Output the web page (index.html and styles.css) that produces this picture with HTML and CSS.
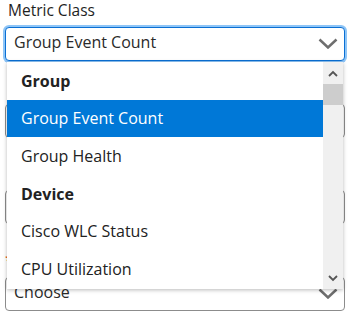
FILE: index.html
```html
<!DOCTYPE html>
<html>
<head>
<meta charset="utf-8">
<title>Metric Class</title>
<link rel="stylesheet" href="styles.css">
</head>
<body>
<div class="form">

<div class="field first">
<label class="label">Metric Class</label>
<div class="select focus">
<span class="value">Group Event Count</span>
<svg class="chev" width="20" height="11" viewBox="0 0 20 11"><polyline points="1.5,1.5 10,9.5 18.5,1.5"/></svg>
</div>

<div class="dropdown">
<ul class="options">
<li class="group">Group</li>
<li class="opt selected">Group Event Count</li>
<li class="opt">Group Health</li>
<li class="group">Device</li>
<li class="opt">Cisco WLC Status</li>
<li class="opt">CPU Utilization</li>
</ul>
<div class="scrollbar">
<div class="sb-btn"><svg width="10" height="7" viewBox="0 0 10 7"><polyline points="1,6 5,2 9,6"/></svg></div>
<div class="sb-thumb"></div>
<div class="sb-track"></div>
<div class="sb-btn"><svg width="10" height="7" viewBox="0 0 10 7"><polyline points="1,1 5,5 9,1"/></svg></div>
</div>
</div>
</div>

<!-- fields below are covered by the open list -->
<div class="field second">
<label class="label"></label>
<div class="select"></div>
</div>

<div class="field third">
<label class="label"></label>
<div class="input"></div>
</div>

<div class="field fourth">
<label class="label req"><span class="star">*</span></label>
<div class="select">
<span class="value">Choose</span>
<svg class="chev" width="20" height="11" viewBox="0 0 20 11"><polyline points="1.5,1.5 10,9.5 18.5,1.5"/></svg>
</div>
</div>

</div>
</body>
</html>
```

FILE: styles.css
```css
/* Metric picker form
*/

body
{ margin: 0;
font-family: "Open Sans", "Liberation Sans", sans-serif;
color: #222;
background-color: #fff;
}

div.form
{ padding: 0 4px 0 5px;
}

div.field
{ position: relative;
}

div.second { margin-top: 16px; }
div.third { margin-top: 25px; }
div.fourth { margin-top: 26px; }

label.label
{ display: block;
height: 20px;
padding-left: 3px;
font-size: 15.5px;
line-height: 20px;
color: #1e1e1e;
}

label.req
{ padding-left: 0;
}

span.star
{ color: #e8590c;
}

/* Select boxes */

div.select, div.input
{ display: flex;
align-items: flex-start;
justify-content: space-between;
box-sizing: border-box;
height: 34px;
margin-top: 7px;
padding: 2px 6px 0 8px;
border: 1px solid #8c8c8c;
border-radius: 4px;
background-color: #fff;
}

div.select.focus
{ border-color: #0a6fd3;
box-shadow: 0 0 0 2px #8ec5f7;
}

span.value
{ font-size: 16px;
line-height: 24px;
color: #2a2a2a;
}

svg.chev
{ margin-top: 8px;
}

svg.chev polyline
{ fill: none;
stroke: #6e6e6e;
stroke-width: 2.5;
}

/* Dropdown list */

div.dropdown
{ position: absolute;
left: 2px;
top: 62px;
width: 336px;
height: 227px;
display: flex;
background-color: #fff;
box-shadow: 0 1px 4px rgba(0, 0, 0, 0.28);
z-index: 10;
}

ul.options
{ flex: 1;
margin: 0;
padding: 0;
list-style: none;
}

ul.options li
{ display: flex;
align-items: center;
height: 37.67px;
padding-left: 14px;
font-size: 16px;
color: #222;
}

li.group
{ font-weight: 700;
}

li.selected
{ background-color: #0078d7;
color: #fff !important;
}

/* Scrollbar */

div.scrollbar
{ display: flex;
flex-direction: column;
width: 20px;
background-color: #f0f0f0;
}

div.sb-btn
{ display: flex;
align-items: center;
justify-content: center;
height: 22px;
}

div.sb-btn svg polyline
{ fill: none;
stroke: #555;
stroke-width: 1.8;
}

div.sb-thumb
{ height: 21px;
background-color: #cdcdcd;
}

div.sb-track
{ flex: 1;
}
```
